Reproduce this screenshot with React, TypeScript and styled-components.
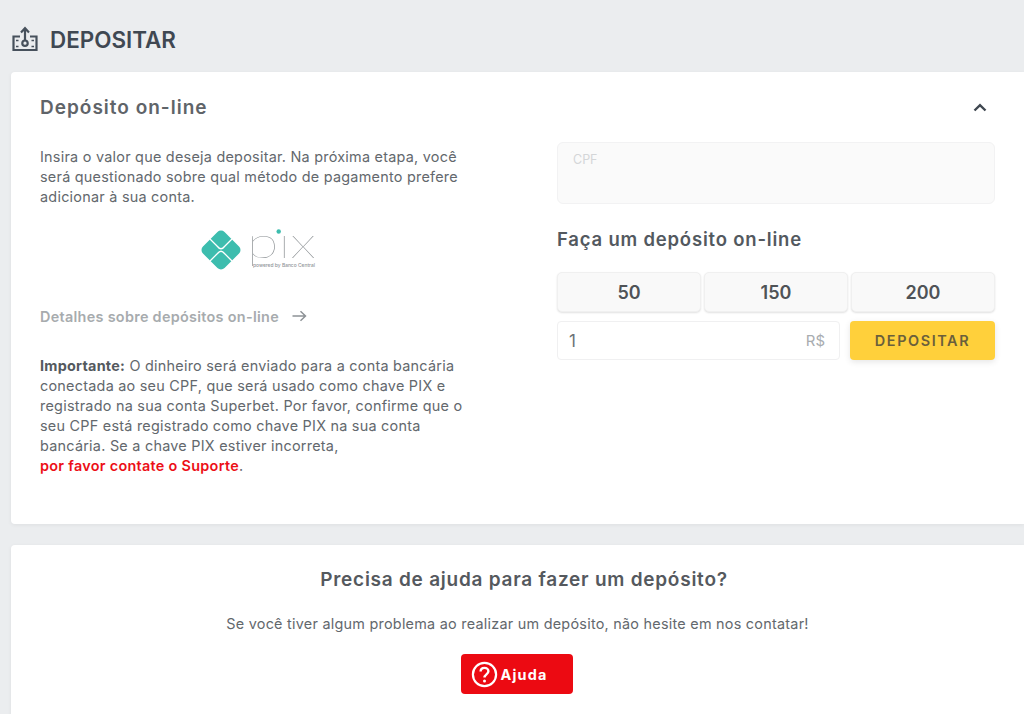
import React from "react";
import styled, { createGlobalStyle } from "styled-components";

const GlobalStyle = createGlobalStyle`
  html, body {
    margin: 0;
    padding: 0;
    height: 714px;
    overflow: hidden;
    background: #ebedef;
    font-family: Inter, "Liberation Sans", sans-serif;
  }
  * {
    box-sizing: border-box;
  }
`;

const amounts = [50, 150, 200];

const DepositIcon = () => (
  <svg width="26" height="26" viewBox="0 0 26 26" fill="none" stroke="#47515c" strokeWidth="2.2">
    <path d="M8 10.5H1.5v13.5h23V10.5H18" />
    <path d="M13 14V2.5M9 6.4 13 2.2l4 4.2" />
    <circle cx="13" cy="17.2" r="2.7" />
    <path d="M4 14.5h2.5M4 20.5h2.5M19.5 14.5H22M19.5 20.5H22" strokeWidth="1.6" />
  </svg>
);

const PixLogo = () => (
  <svg width="120" height="62" viewBox="0 -16 120 62">
    <rect x="5.75" y="6.75" width="30.5" height="30.5" rx="5" fill="#3dbdae" transform="rotate(45 21 22)" />
    <path d="M10 11l7.5 7.5Q21 23 24.5 18.5L32 11" fill="none" stroke="#fff" strokeWidth="1.3" />
    <path d="M10 33l7.5-7.5Q21 21 24.5 25.5L32 33" fill="none" stroke="#fff" strokeWidth="1.3" />
    <text
      x="47"
      y="30"
      fontFamily="Lato, sans-serif"
      fontWeight="100"
      fontSize="44"
      fill="#8a8f92"
      textLength="69"
      lengthAdjust="spacingAndGlyphs"
    >
      pıx
    </text>
    <circle cx="78.7" cy="3.5" r="2.2" fill="#3dbdae" />
    <text
      x="53"
      y="39"
      fontFamily="Inter, sans-serif"
      fontSize="4.6"
      fontWeight="500"
      fill="#8f9498"
      textLength="62"
      lengthAdjust="spacingAndGlyphs"
    >
      powered by Banco Central
    </text>
  </svg>
);

const Chevron = () => (
  <svg width="14" height="9" viewBox="0 0 14 9" fill="none" stroke="#3f4750" strokeWidth="2.4">
    <path d="M1.5 7.5 7 2.2l5.5 5.3" />
  </svg>
);

const Arrow = () => (
  <svg width="15" height="12" viewBox="0 0 15 12" fill="none" stroke="#8d9296" strokeWidth="1.5">
    <path d="M0.5 6h13M8.5 1.2 13.5 6l-5 4.8" />
  </svg>
);

const HelpIcon = () => (
  <svg width="27" height="27" viewBox="0 0 27 27" fill="none" stroke="#fff" strokeWidth="2.2">
    <circle cx="13.5" cy="13.5" r="11.6" />
    <path d="M9.6 10.6c0-2.3 1.7-3.7 3.9-3.7s3.9 1.4 3.9 3.4c0 3-3.9 3.1-3.9 6.2" strokeWidth="2.4" />
    <circle cx="13.5" cy="20" r="1.5" fill="#fff" stroke="none" />
  </svg>
);

const App = () => {
  return (
    <Page>
      <GlobalStyle />
      <PageHeader>
        <DepositIcon />
        <PageTitle>DEPOSITAR</PageTitle>
      </PageHeader>
      <DepositCard>
        <CardHeader>
          <CardTitle>Depósito on-line</CardTitle>
          <ChevronWrap>
            <Chevron />
          </ChevronWrap>
        </CardHeader>
        <Columns>
          <LeftColumn>
            <BodyText>
              Insira o valor que deseja depositar. Na próxima etapa, você
              <br />
              será questionado sobre qual método de pagamento prefere
              <br />
              adicionar à sua conta.
            </BodyText>
            <LogoRow>
              <PixLogo />
            </LogoRow>
            <DetailsLink>
              Detalhes sobre depósitos on-line
              <Arrow />
            </DetailsLink>
            <BodyText>
              <strong>Importante:</strong> O dinheiro será enviado para a conta bancária
              <br />
              conectada ao seu CPF, que será usado como chave PIX e
              <br />
              registrado na sua conta Superbet. Por favor, confirme que o
              <br />
              seu CPF está registrado como chave PIX na sua conta
              <br />
              bancária. Se a chave PIX estiver incorreta,
              <br />
              <SupportLink>por favor contate o Suporte</SupportLink>.
            </BodyText>
          </LeftColumn>
          <RightColumn>
            <CpfField>CPF</CpfField>
            <FormTitle>Faça um depósito on-line</FormTitle>
            <AmountRow>
              {amounts.map((amount) => (
                <AmountButton key={amount}>{amount}</AmountButton>
              ))}
            </AmountRow>
            <SubmitRow>
              <ValueField>
                <span>1</span>
                <Currency>R$</Currency>
              </ValueField>
              <SubmitButton>DEPOSITAR</SubmitButton>
            </SubmitRow>
          </RightColumn>
        </Columns>
      </DepositCard>
      <HelpCard>
        <HelpTitle>Precisa de ajuda para fazer um depósito?</HelpTitle>
        <HelpText>
          Se você tiver algum problema ao realizar um depósito, não hesite em nos contatar!
        </HelpText>
        <HelpButton>
          <HelpIcon />
          Ajuda
        </HelpButton>
      </HelpCard>
    </Page>
  );
};

export default App;

const Page = styled.div`
  padding-left: 11px;
  color: #4f565c;
`;

const PageHeader = styled.div`
  height: 72px;
  display: flex;
  align-items: center;
  gap: 12px;
  padding: 6px 0 0 1px;
`;

const PageTitle = styled.h1`
  margin: 0;
  font-size: 22.4px;
  font-weight: 600;
  color: #3f4852;
`;

const DepositCard = styled.section`
  height: 452px;
  padding: 0 29px;
  background: #fff;
  border-radius: 4px 0 0 4px;
  box-shadow: 0 1px 4px rgba(0, 0, 0, 0.06);
`;

const CardHeader = styled.div`
  height: 70px;
  display: flex;
  align-items: center;
  justify-content: space-between;
`;

const CardTitle = styled.h2`
  margin: 0;
  font-size: 19px;
  font-weight: 600;
  letter-spacing: 1px;
  color: #5f6469;
`;

const ChevronWrap = styled.div`
  display: flex;
  padding-right: 8px;
`;

const Columns = styled.div`
  display: grid;
  grid-template-columns: 517px 438px;
`;

const LeftColumn = styled.div`
  padding-top: 5px;
`;

const BodyText = styled.p`
  margin: 0;
  font-size: 14.4px;
  line-height: 20px;
  letter-spacing: 0.25px;
  color: #63686d;

  strong {
    font-weight: 700;
    color: #54595e;
  }
`;

const LogoRow = styled.div`
  display: flex;
  align-items: flex-start;
  padding: 5px 0 0 160px;
  height: 87px;
`;

const DetailsLink = styled.div`
  display: flex;
  align-items: center;
  gap: 13px;
  height: 20px;
  margin: 12px 0 30px;
  font-size: 14.4px;
  font-weight: 600;
  letter-spacing: 0.3px;
  color: #a7abae;
`;

const SupportLink = styled.span`
  font-weight: 600;
  letter-spacing: 0.3px;
  color: #ec0f17;
`;

const RightColumn = styled.div`
  display: flex;
  flex-direction: column;
`;

const CpfField = styled.div`
  height: 62px;
  padding: 9px 15px;
  font-size: 12.5px;
  color: #d4d6d8;
  background: #fafafa;
  border: 1px solid #f2f2f3;
  border-radius: 6px;
`;

const FormTitle = styled.h3`
  margin: 24px 0 22px;
  font-size: 18.5px;
  line-height: 22px;
  font-weight: 600;
  letter-spacing: 0.8px;
  color: #53595f;
`;

const AmountRow = styled.div`
  display: grid;
  grid-template-columns: repeat(3, 1fr);
  gap: 3px;
`;

const AmountButton = styled.button`
  height: 40px;
  padding: 0;
  font-family: inherit;
  font-size: 18px;
  font-weight: 600;
  color: #4f5357;
  background: #f9f9f9;
  border: 1px solid #f0f0f0;
  border-radius: 5px;
  box-shadow: 0 1px 2px rgba(0, 0, 0, 0.12);
`;

const SubmitRow = styled.div`
  display: grid;
  grid-template-columns: 283px 145px;
  justify-content: space-between;
  margin-top: 9px;
`;

const ValueField = styled.div`
  height: 39px;
  display: flex;
  align-items: center;
  justify-content: space-between;
  padding: 0 14px 0 11px;
  font-size: 17px;
  color: #6c7176;
  background: #fff;
  border: 1px solid #f0f0f1;
  border-radius: 4px;
`;

const Currency = styled.span`
  font-size: 14.9px;
  color: #a8acb0;
`;

const SubmitButton = styled.button`
  height: 39px;
  padding: 0;
  font-family: inherit;
  font-size: 14.4px;
  font-weight: 600;
  letter-spacing: 1.6px;
  color: #6a5f3c;
  background: #ffd03b;
  border: 0;
  border-radius: 4px;
  box-shadow: 0 2px 6px rgba(0, 0, 0, 0.1);
`;

const HelpCard = styled.section`
  margin-top: 21px;
  height: 180px;
  padding-top: 24px;
  display: flex;
  flex-direction: column;
  align-items: center;
  background: #fff;
  border-radius: 4px 0 0 0;
  box-shadow: 0 1px 4px rgba(0, 0, 0, 0.06);
`;

const HelpTitle = styled.h2`
  margin: 0;
  padding-left: 13px;
  font-size: 19px;
  line-height: 22px;
  font-weight: 600;
  letter-spacing: 0.75px;
  color: #55595e;
`;

const HelpText = styled.p`
  margin: 23px 0 0;
  font-size: 14.4px;
  line-height: 20px;
  letter-spacing: 0.25px;
  color: #63686d;
`;

const HelpButton = styled.button`
  width: 112px;
  height: 40px;
  margin: 20px 2px 0 0;
  padding: 0 0 0 10px;
  display: flex;
  align-items: center;
  gap: 3px;
  font-family: inherit;
  font-size: 14.4px;
  font-weight: 700;
  letter-spacing: 1.2px;
  color: #fff;
  background: #ec0a12;
  border: 0;
  border-radius: 4px;
`;
